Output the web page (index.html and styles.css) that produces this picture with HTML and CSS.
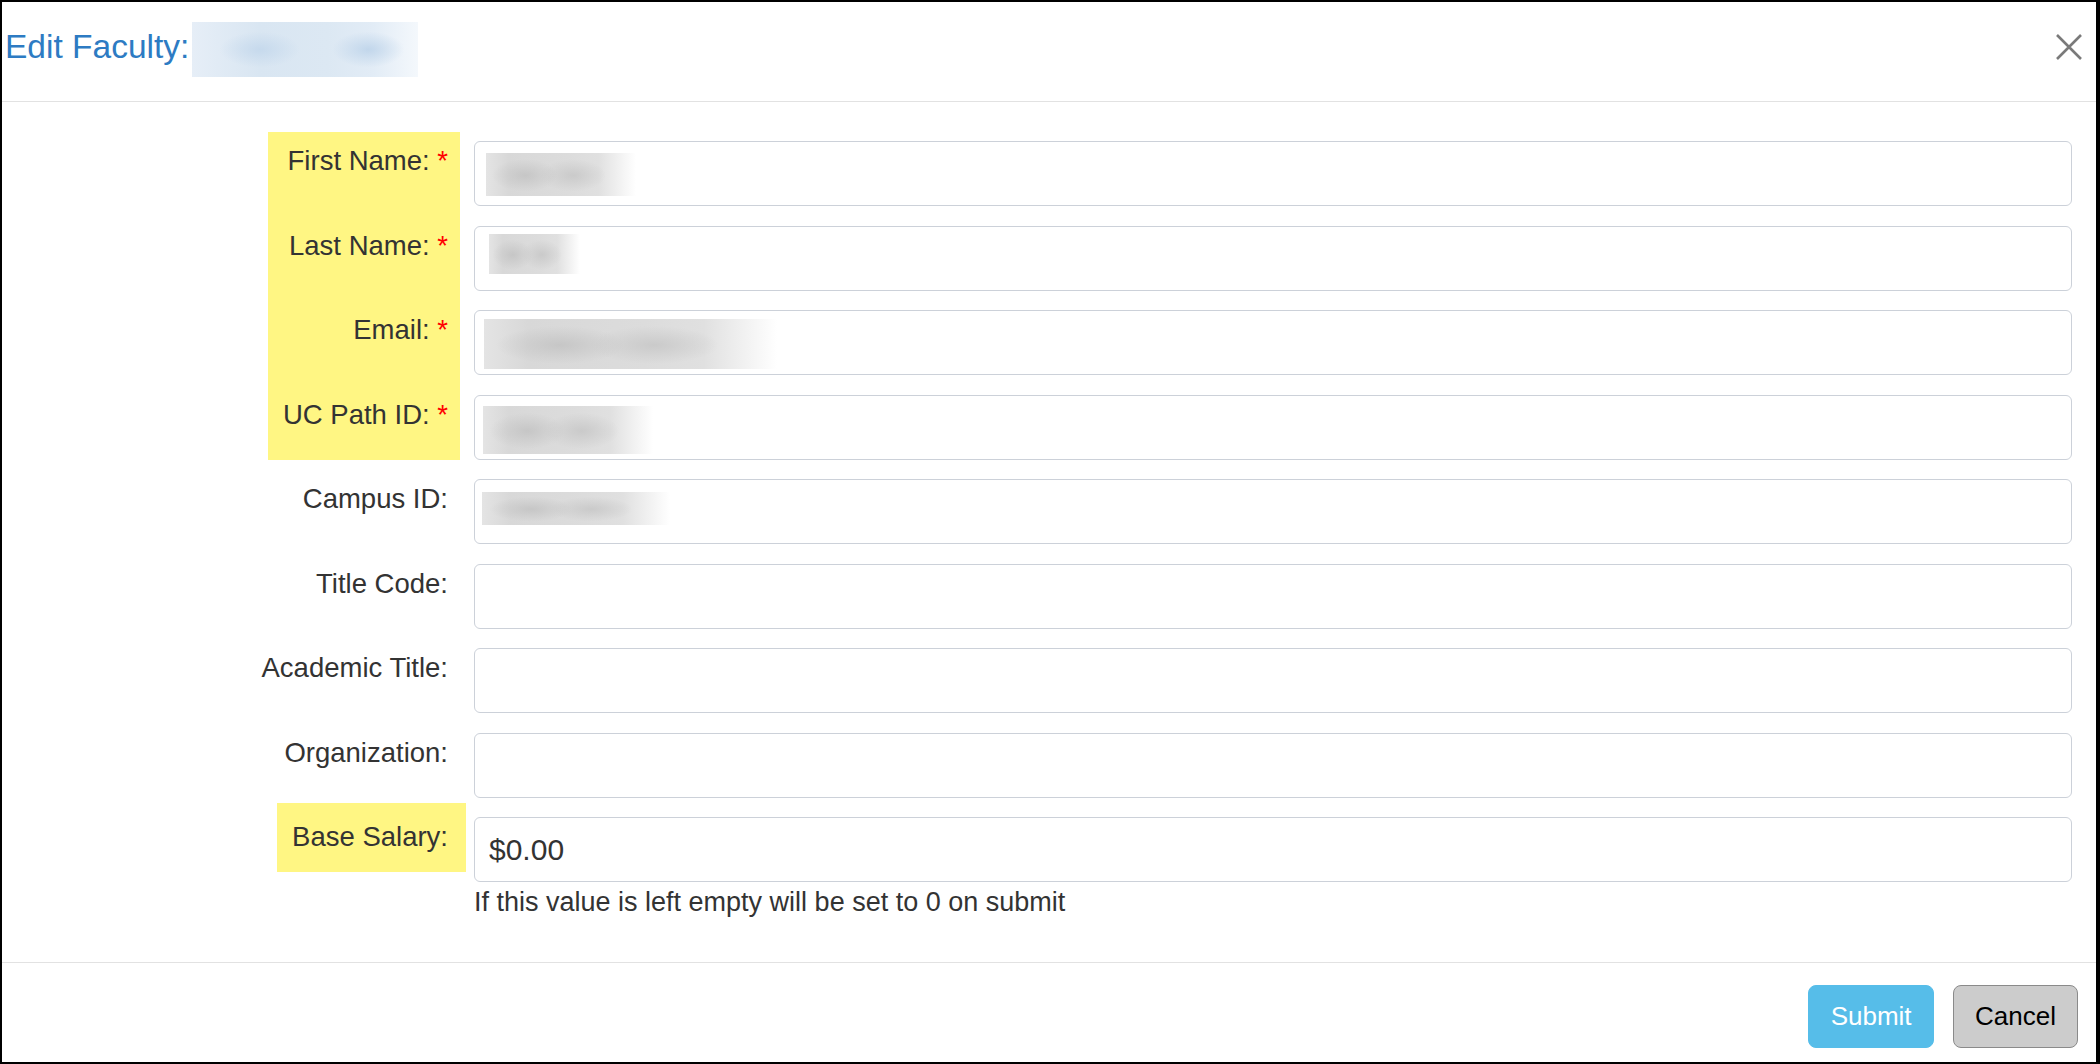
FILE: index.html
```html
<!DOCTYPE html>
<html lang="en">

<head>
    <meta charset="UTF-8">
    <meta name="viewport" content="width=device-width, initial-scale=1.0">
    <title>Edit Faculty</title>
    <link rel="stylesheet" href="styles.css">
</head>

<body>
    <div class="modal">
        <div class="modal-header">
            <h4 class="modal-title">Edit Faculty:</h4>
            <span class="redacted-title"></span>
            <button type="button" class="close" aria-label="Close">
                <svg width="26" height="26" viewBox="0 0 26 26">
                    <path d="M1 1 L25 25 M25 1 L1 25" stroke="#7a7a7a" stroke-width="2.6" fill="none"/>
                </svg>
            </button>
        </div>

        <form class="modal-body">
            <div class="required-group">
                <div class="form-row">
                    <label class="form-label">First Name: <span class="req">*</span></label>
                    <div class="form-field"><input type="text" class="form-input redacted blur-first"></div>
                </div>
                <div class="form-row">
                    <label class="form-label">Last Name: <span class="req">*</span></label>
                    <div class="form-field"><input type="text" class="form-input redacted blur-last"></div>
                </div>
                <div class="form-row">
                    <label class="form-label">Email: <span class="req">*</span></label>
                    <div class="form-field"><input type="text" class="form-input redacted blur-email"></div>
                </div>
                <div class="form-row">
                    <label class="form-label">UC Path ID: <span class="req">*</span></label>
                    <div class="form-field"><input type="text" class="form-input redacted blur-ucpath"></div>
                </div>
            </div>
            <div class="form-row">
                <label class="form-label">Campus ID:</label>
                <div class="form-field"><input type="text" class="form-input redacted blur-campus"></div>
            </div>
            <div class="form-row">
                <label class="form-label">Title Code:</label>
                <div class="form-field"><input type="text" class="form-input"></div>
            </div>
            <div class="form-row">
                <label class="form-label">Academic Title:</label>
                <div class="form-field"><input type="text" class="form-input"></div>
            </div>
            <div class="form-row">
                <label class="form-label">Organization:</label>
                <div class="form-field"><input type="text" class="form-input"></div>
            </div>
            <div class="form-row">
                <label class="form-label marked">Base Salary:</label>
                <div class="form-field">
                    <input type="text" class="form-input" value="$0.00">
                    <p class="help-text">If this value is left empty will be set to 0 on submit</p>
                </div>
            </div>
        </form>

        <div class="modal-footer">
            <button type="button" class="btn btn-submit">Submit</button>
            <button type="button" class="btn btn-cancel">Cancel</button>
        </div>
    </div>
</body>

</html>
```

FILE: styles.css
```css
html, body {
    margin: 0;
    padding: 0;
    height: 100%;
    overflow: hidden;
}

body {
    font-family: 'Liberation Sans', Arial, sans-serif;
    color: #333;
    background-color: #ffffff;
}

.modal {
    box-sizing: border-box;
    width: 100%;
    height: 100%;
    border-style: solid;
    border-color: #000;
    border-width: 2px 4px 2px 2px;
    background-color: #fff;
    display: flex;
    flex-direction: column;
}

/* header */

.modal-header {
    box-sizing: border-box;
    height: 100px;
    flex: none;
    display: flex;
    align-items: flex-start;
    padding: 0 14px 0 3px;
    border-bottom: 1px solid #e2e2e2;
}

.modal-title {
    margin: 26px 0 0;
    font-size: 33.5px;
    line-height: 38px;
    font-weight: normal;
    color: #2d7bc3;
}

.redacted-title {
    display: block;
    width: 226px;
    height: 55px;
    margin: 20px 0 0 3px;
    background:
        radial-gradient(ellipse 40px 18px at 30% 50%, rgba(196, 216, 236, 0.9), rgba(196, 216, 236, 0)),
        radial-gradient(ellipse 36px 18px at 78% 50%, rgba(190, 212, 234, 0.9), rgba(190, 212, 234, 0)),
        linear-gradient(90deg, #e6eef7 0%, #d9e6f2 30%, #dce8f3 60%, #e2ecf6 80%, #f4f8fc 100%);
}

.close {
    margin: 32px 0 0 auto;
    padding: 0;
    border: none;
    background: none;
    width: 26px;
    height: 26px;
    cursor: pointer;
}

.close svg {
    display: block;
}

/* body */

.modal-body {
    flex: 1;
    margin: 0;
    padding-top: 39px;
    display: flex;
    flex-direction: column;
    gap: 19.5px;
}

.required-group {
    position: relative;
    isolation: isolate;
    display: flex;
    flex-direction: column;
    gap: 19.5px;
}

.required-group::before {
    content: "";
    position: absolute;
    left: 266px;
    top: -9px;
    bottom: 0;
    width: 192px;
    background-color: #fff683;
    z-index: -1;
}

.form-row {
    display: grid;
    grid-template-columns: 458px 1598px;
    column-gap: 14px;
}

.form-label {
    box-sizing: border-box;
    padding: 3px 12px 0 0;
    text-align: right;
    font-size: 27.5px;
    line-height: 34px;
    color: #333;
}

.form-label.marked {
    position: relative;
    isolation: isolate;
}

.form-label.marked::before {
    content: "";
    position: absolute;
    top: -14px;
    right: -6px;
    width: 189px;
    height: 69px;
    background-color: #fff683;
    z-index: -1;
}

.req {
    color: #f00;
}

.form-input {
    box-sizing: border-box;
    display: block;
    width: 100%;
    height: 65px;
    margin: 0;
    padding: 0 14px;
    border: 1px solid #ccd1d9;
    border-radius: 6px;
    background-color: #fff;
    font-family: inherit;
    font-size: 30px;
    color: #333;
    outline: none;
}

/* blurred values */

.redacted {
    background-repeat: no-repeat;
    background-image:
        radial-gradient(ellipse 22% 38% at 26% 52%, rgba(196, 196, 196, 0.9), rgba(196, 196, 196, 0)),
        radial-gradient(ellipse 22% 38% at 58% 52%, rgba(200, 200, 200, 0.9), rgba(200, 200, 200, 0)),
        linear-gradient(90deg, #e4e4e4 0%, #d8d8d8 15%, #dcdcdc 55%, #e0e0e0 75%, rgba(255, 255, 255, 0) 100%);
}

.blur-first {
    background-position: 11px 11px;
    background-size: 150px 43px;
}

.blur-last {
    background-position: 14px 7px;
    background-size: 91px 40px;
}

.blur-email {
    background-position: 9px 8px;
    background-size: 293px 50px;
}

.blur-ucpath {
    background-position: 8px 10px;
    background-size: 170px 48px;
}

.blur-campus {
    background-position: 7px 12px;
    background-size: 188px 33px;
}

.help-text {
    margin: 5px 0 0;
    font-size: 27px;
    line-height: 31px;
    color: #333;
}

/* footer */

.modal-footer {
    box-sizing: border-box;
    height: 100px;
    flex: none;
    display: flex;
    justify-content: flex-end;
    align-items: flex-start;
    gap: 19px;
    padding: 22px 18px 0 0;
    border-top: 1px solid #e2e2e2;
}

.btn {
    height: 63px;
    border-radius: 8px;
    font-family: inherit;
    font-size: 26px;
    cursor: pointer;
}

.btn-submit {
    padding: 0 21.5px;
    border: 1px solid #56bde9;
    background-color: #56bde9;
    color: #fff;
}

.btn-cancel {
    padding: 0 21px;
    border: 1px solid #8a8a8a;
    background-color: #ccc;
    color: #000;
}
```
